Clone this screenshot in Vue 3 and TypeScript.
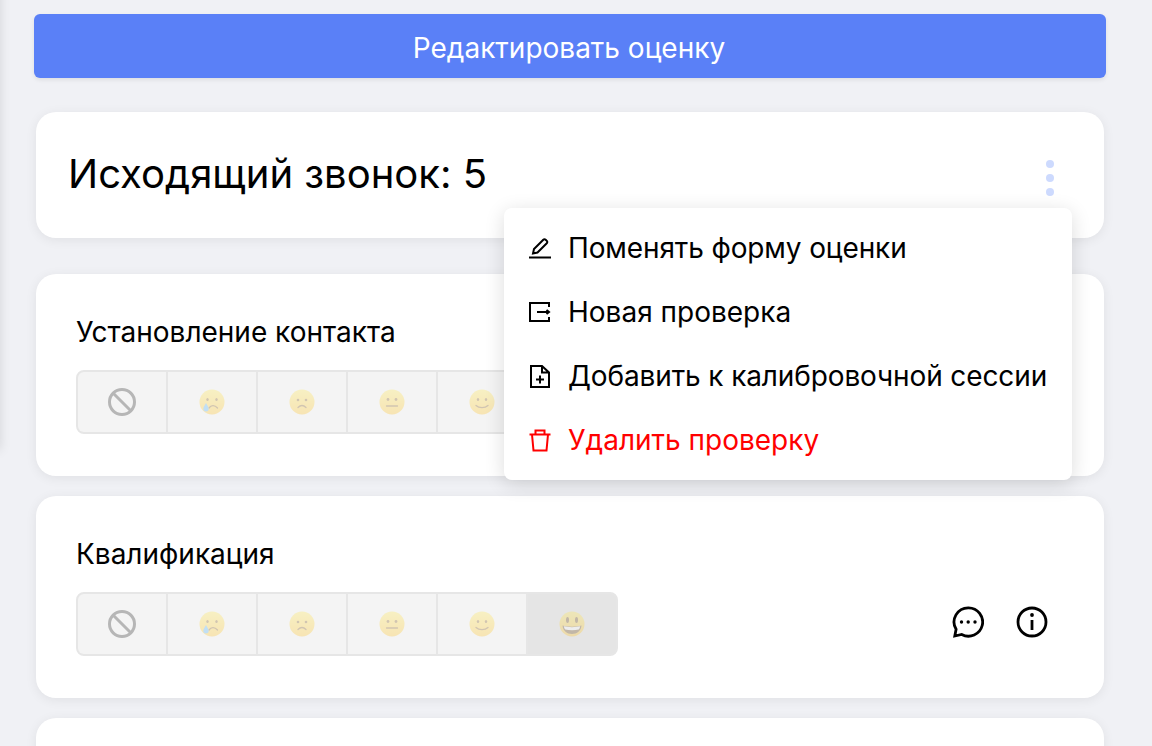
<script setup lang="ts">
interface Criterion { title: string; active: number }
const criteria: Criterion[] = [
  { title: 'Установление контакта', active: -1 },
  { title: 'Квалификация', active: 5 },
]
const faces = ['none', 'cry', 'sad', 'neutral', 'smile', 'grin']
</script>

<template>
  <div class="page">
    <div class="side-edge"></div>
    <button class="edit">Редактировать оценку</button>

    <section class="card head">
      <h1>Исходящий звонок: 5</h1>
      <div class="dots"><i></i><i></i><i></i></div>
      <div class="menu">
        <div class="item">
          <svg viewBox="0 0 24 24" class="ic"><path d="M1 21.500h22M5 17.500l1-4.500L15.300 3.700a1.600 1.600 0 0 1 2.300 0l1.200 1.200a1.600 1.600 0 0 1 0 2.300L9.500 16.500z" /></svg>
          <span class="tight">Поменять форму оценки</span>
        </div>
        <div class="item">
          <svg viewBox="0 0 24 24" class="ic"><path d="M21 7V3H2v18h19v-4M9 12h12M18.500 10l2.500 2-2.500 2" /></svg>
          <span>Новая проверка</span>
        </div>
        <div class="item">
          <svg viewBox="0 0 24 24" class="ic"><path d="M14 2H3v21h18V8.500zM14 2v6.500h7M12 11.500v8M8 15.500h8" /></svg>
          <span class="tight">Добавить к калибровочной сессии</span>
        </div>
        <div class="item danger">
          <svg viewBox="0 0 24 24" class="ic"><path d="M1.500 6.500h21M7.500 6.500V2.500h9v4M4 6.500 5.500 22.500h13L20 6.500" /></svg>
          <span>Удалить проверку</span>
        </div>
      </div>
    </section>

    <section v-for="c in criteria" :key="c.title" class="card crit">
      <div class="label">{{ c.title }}</div>
      <div class="row">
        <div class="seg">
          <div v-for="(f, i) in faces" :key="f" class="cell" :class="{ on: i === c.active }">
            <svg v-if="f === 'none'" viewBox="0 0 28 28" class="prohibit">
              <circle cx="14" cy="14" r="12.500" />
              <path d="M5.500 5.500l17 17" />
            </svg>
            <svg v-else viewBox="0 0 26 26" class="face">
              <defs>
                <linearGradient :id="'g' + f + c.active" x1="0" y1="0" x2="0" y2="1">
                  <stop offset="0" stop-color="#ffe95e" />
                  <stop offset="1" stop-color="#ffc42e" />
                </linearGradient>
              </defs>
              <circle cx="13" cy="13" r="12.500" :fill="'url(#g' + f + c.active + ')'" />
              <template v-if="f === 'cry'">
                <ellipse cx="8.500" cy="10.500" rx="1.200" ry="1.500" fill="#8a6428" />
                <ellipse cx="17.500" cy="10.500" rx="1.200" ry="1.500" fill="#8a6428" />
                <path d="M10 19c2-2.800 5.500-3.300 8.500 0" class="mouth" />
                <path d="M7 14c-1.300 2.600-2.700 4-2.700 5.800a2.700 2.700 0 0 0 5.400 0c0-1.800-1.400-3.200-2.700-5.800z" fill="#58b4f5" />
              </template>
              <template v-else-if="f === 'sad'">
                <circle cx="9" cy="11" r="1.300" fill="#8a6428" />
                <circle cx="17" cy="11" r="1.300" fill="#8a6428" />
                <path d="M9 18.500c2.500-2.500 5.500-2.500 8 0" class="mouth" />
              </template>
              <template v-else-if="f === 'neutral'">
                <circle cx="9" cy="10.500" r="1.400" fill="#8a6428" />
                <circle cx="17" cy="10.500" r="1.400" fill="#8a6428" />
                <path d="M7.500 17h11" class="mouth" />
              </template>
              <template v-else-if="f === 'smile'">
                <ellipse cx="9" cy="10.500" rx="1.200" ry="1.500" fill="#8a6428" />
                <ellipse cx="17" cy="10.500" rx="1.200" ry="1.500" fill="#8a6428" />
                <path d="M7 16.500c3 2.800 9 2.800 12 0" class="mouth" />
              </template>
              <template v-else>
                <ellipse cx="8.500" cy="9" rx="1.500" ry="3" fill="#7a5a2a" />
                <ellipse cx="17.500" cy="9" rx="1.500" ry="3" fill="#7a5a2a" />
                <path d="M3.500 14.500c5 1.500 14 1.500 19 0-.5 5.500-4.500 8.500-9.500 8.500s-9-3-9.500-8.500z" fill="#7a5a2a" />
                <path d="M4.800 15.300c5 1.100 11.400 1.100 16.400 0-.3 1.500-.8 2.500-1.500 3.300-4 .8-9.400.8-13.400 0-.7-.8-1.200-1.800-1.500-3.300z" fill="#fff" />
              </template>
            </svg>
          </div>
        </div>
        <div class="actions">
          <svg viewBox="0 0 32 32" class="act">
            <path d="M16.500 1.800a14.200 14.200 0 1 1-6.800 26.700L2.800 30l1.300-6.700A14.200 14.200 0 0 1 16.500 1.800z" />
            <circle cx="9.500" cy="16" r="1.700" class="fill" />
            <circle cx="16.200" cy="16" r="1.700" class="fill" />
            <circle cx="23" cy="16" r="1.700" class="fill" />
          </svg>
          <svg viewBox="0 0 32 32" class="act">
            <circle cx="16" cy="16" r="14" />
            <path d="M16 14v10" />
            <circle cx="16" cy="9" r="1.900" class="fill" />
          </svg>
        </div>
      </div>
    </section>

    <section class="card tail"></section>
  </div>
</template>

<style scoped>
.page {
  position: relative;
  box-sizing: border-box;
  height: 746px;
  overflow: hidden;
  padding: 14px 46px 0 34px;
  background: #f0f1f5;
  font-family: Inter, "Liberation Sans", sans-serif;
  color: #000;
}
.side-edge {
  position: absolute;
  left: -12px;
  top: -20px;
  width: 12px;
  height: 470px;
  box-shadow: 0 0 12px rgba(0, 0, 0, 0.12);
}
.edit {
  display: block;
  width: 100%;
  height: 64px;
  padding: 4px 2px 0 0;
  border: 0;
  border-radius: 6px;
  background: #5a80f7;
  color: #fff;
  font: 400 28px Inter, "Liberation Sans", sans-serif;
  box-shadow: 0 2px 4px rgba(0, 0, 0, 0.08);
}
.card {
  margin: 0 2px;
  background: #fff;
  border-radius: 20px;
  box-shadow: 0 2px 12px rgba(0, 0, 0, 0.07);
}
.head {
  position: relative;
  z-index: 2;
  display: flex;
  align-items: center;
  justify-content: space-between;
  height: 126px;
  margin-top: 34px;
  margin-bottom: 36px;
  padding: 0 50px 0 32px;
  box-sizing: border-box;
}
.head h1 {
  margin: 0;
  font-size: 40px;
  font-weight: 400;
  line-height: 46px;
  position: relative;
  top: -1px;
}
.dots {
  display: flex;
  flex-direction: column;
  gap: 6px;
  position: relative;
  top: 3px;
}
.dots i {
  display: block;
  width: 8px;
  height: 8px;
  border-radius: 50%;
  background: #cddafe;
}
.menu {
  position: absolute;
  left: 468px;
  top: 96px;
  width: 568px;
  box-sizing: border-box;
  padding: 8px 0;
  background: #fff;
  border-radius: 8px;
  box-shadow: 0 4px 20px rgba(0, 0, 0, 0.14);
}
.item {
  display: flex;
  align-items: center;
  gap: 16px;
  height: 64px;
  padding: 0 24px;
  font-size: 28px;
  white-space: nowrap;
}
.tight {
  letter-spacing: -0.12px;
}
.item.danger {
  color: #ff0000;
}
.ic {
  width: 24px;
  height: 24px;
  flex: none;
  fill: none;
  stroke: currentColor;
  stroke-width: 2;
}
.crit {
  box-sizing: border-box;
  height: 202px;
  margin-bottom: 20px;
  padding: 40px 40px 0;
}
.label {
  height: 36px;
  margin-bottom: 20px;
  font-size: 28px;
  line-height: 36px;
}
.row {
  display: flex;
  align-items: center;
  justify-content: space-between;
}
.seg {
  display: flex;
  width: 542px;
  height: 64px;
  box-sizing: border-box;
  overflow: hidden;
  background: #e6e6e6;
  border: 2px solid #e6e6e6;
  border-radius: 8px;
  gap: 2px;
}
.cell {
  flex: 1;
  display: flex;
  align-items: center;
  justify-content: center;
  background: #f4f4f4;
}
.cell.on {
  background: #e5e5e5;
}
.prohibit {
  width: 28px;
  height: 28px;
  fill: none;
  stroke: #b6b6b6;
  stroke-width: 3;
}
.face {
  width: 26px;
  height: 26px;
  opacity: 0.32;
}
.mouth {
  fill: none;
  stroke: #8a6428;
  stroke-width: 1.300;
  stroke-linecap: round;
}
.actions {
  display: flex;
  gap: 32px;
  padding-right: 16px;
  position: relative;
  top: -2px;
}
.act {
  width: 32px;
  height: 32px;
  fill: none;
  stroke: #000;
  stroke-width: 2.800;
}
.act .fill {
  fill: #000;
  stroke: none;
}
.tail {
  height: 80px;
}
</style>
